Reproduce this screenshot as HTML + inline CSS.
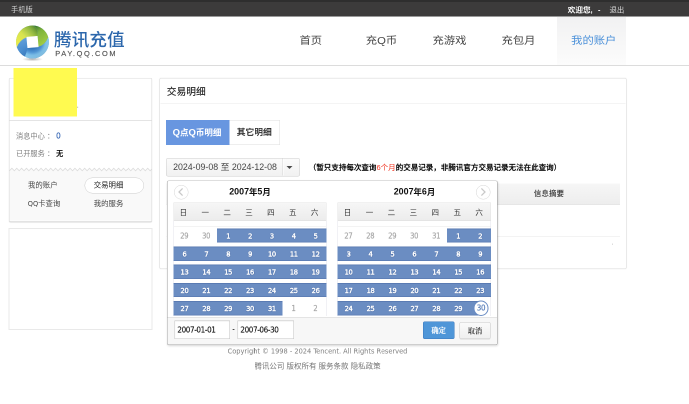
<!DOCTYPE html>
<html lang="zh-CN">
<head>
<meta charset="utf-8">
<title>腾讯充值 - 交易明细</title>
<style>
*{box-sizing:border-box;margin:0;padding:0}
html,body{width:689px;height:404px;overflow:hidden;background:#fff}
body{font-family:"Liberation Sans","Noto Sans CJK SC",sans-serif;color:#333}
#root{will-change:transform;position:absolute;left:0;top:0;width:1378px;height:808px;transform:scale(.5);transform-origin:0 0;background:#fff;overflow:hidden}
#root *{position:absolute;white-space:nowrap}
.t{line-height:1;transform:translateY(-50%)}
.tc{line-height:1;transform:translate(-50%,-50%)}
#topbar{left:0;top:0;width:1378px;height:33.4px;background:#3c3b3b;border-top:4.4px solid #2e2e2e;border-bottom:1.5px solid #333}
#header{left:0;top:33.4px;width:1378px;height:99px;background:#fff;border-bottom:2px solid #dcdcdc}
.nav{font-size:22.6px;color:#444;top:49.1px}
.nav.tc{transform:translate(-50%,-50%) scaleY(.9)}
#navon{left:1114px;top:0.6px;width:138px;height:96px;background:linear-gradient(#f1f1f2,#f9f9f9 75%,#fcfcfc)}
.panel{background:#fff;border:1.6px solid #d6d6d6;border-radius:3px}
.wq{font-family:"Liberation Sans","Noto Sans CJK SC",sans-serif}
.tah{font-family:"DejaVu Sans Condensed","DejaVu Sans","Noto Sans CJK SC",sans-serif}
.cj{position:relative !important;font-size:16.8px;top:1.2px;line-height:0}
.q{position:static !important;font-size:19px;line-height:0}
.dv{font-family:"DejaVu Sans","Noto Sans CJK SC",sans-serif}
.wk{height:37.4px;background:linear-gradient(#f6f6f6,#ececec);border:1px solid #e2e2e2;border-bottom:1.5px solid #dcdcdc}
.wk span{top:0;height:36px;line-height:37.8px;text-align:center;font-size:15px;color:#333;font-weight:400;margin-left:-2.5px}
.tb{border:1px solid #e3e3ea;border-top:0;border-bottom:0}
.wkline{height:1px;background:#e6e6e6}
.d{height:28.8px;line-height:30.3px;text-align:center;font-family:"DejaVu Sans Condensed","DejaVu Sans",sans-serif;font-size:14.8px;letter-spacing:-0.6px;padding-left:0.9px}
.d.on{-webkit-text-stroke:0.8px #fff;text-shadow:0 0 2px rgba(45,75,135,.9),0 1px 1.5px rgba(45,75,135,.7);box-shadow:inset 0 1.6px 0 #5475ad,inset 0 -1.6px 0 #5a7bb2}
.d.on{background:#6b8dc2;color:#fff}
.d.off{color:#a6a6a6;-webkit-text-stroke:0.35px #a6a6a6;padding-left:0;font-size:15px}
.cur{width:30.4px;height:30.4px;border-radius:50%;background:#fff;border:2.2px solid #6a8cc3;color:#5a7fba;line-height:26.8px;-webkit-text-stroke:0.4px #5a7fba;text-align:center;font-family:"DejaVu Sans Condensed","DejaVu Sans",sans-serif;font-size:15.9px;letter-spacing:-0.7px;text-indent:-0.7px}
.arrow{width:29px;height:29px;border:1.5px solid #d4d4d4;border-radius:50%;background:#fff}
.inp{height:37.4px;border:1.5px solid #c4c4c4;background:#fff;box-shadow:inset 0 1px 2px rgba(0,0,0,.08);font-family:"DejaVu Sans Condensed","DejaVu Sans",sans-serif;font-size:16px;letter-spacing:-0.75px;color:#1a1a1a;line-height:35.6px;padding-left:5.3px;-webkit-text-stroke:0.3px #1a1a1a}
.btn{height:34.6px;width:62.6px;border-radius:3px;font-family:"Noto Serif CJK SC","Liberation Serif",serif;font-weight:600;font-size:14.5px;text-align:center;line-height:31px}
</style>
</head>
<body>
<div id="root">
  <div id="topbar">
    <span class="t" style="left:22px;top:15.2px;font-size:14.5px;color:#d0d0d0">手机版</span>
    <span class="t" style="left:1135.5px;top:16.4px;font-size:15.2px;color:#fff;font-weight:700">欢迎您,</span><span class="t" style="left:1196px;top:15.6px;font-size:14.5px;color:#fff;font-weight:700">-</span>
    <span class="t" style="left:1219px;top:16.4px;font-size:14.8px;color:#dcdcdc">退出</span>
  </div>
  <div id="header">
    <div id="navon"></div>
    <svg style="left:26.6px;top:12.6px" width="76" height="80" viewBox="-38 -38 76 80">
      <defs>
        <linearGradient id="g1" gradientUnits="userSpaceOnUse" x1="-32" y1="8" x2="8" y2="-30"><stop offset="0" stop-color="#eeee4a"/><stop offset=".45" stop-color="#d4e143"/><stop offset=".78" stop-color="#88b334"/><stop offset="1" stop-color="#4a8028"/></linearGradient>
        <linearGradient id="g2" gradientUnits="userSpaceOnUse" x1="4" y1="-30" x2="30" y2="6"><stop offset="0" stop-color="#3c7a2a"/><stop offset=".3" stop-color="#7db339"/><stop offset="1" stop-color="#a8d144"/></linearGradient>
        <radialGradient id="g3" gradientUnits="userSpaceOnUse" cx="0" cy="0" r="33"><stop offset=".35" stop-color="#2f6fb4"/><stop offset=".62" stop-color="#4d93d4"/><stop offset=".8" stop-color="#7cc2ee"/><stop offset="1" stop-color="#8fd0f5"/></radialGradient>
        <linearGradient id="g4" gradientUnits="userSpaceOnUse" x1="-32" y1="0" x2="-8" y2="26"><stop offset="0" stop-color="#5b9bd9"/><stop offset=".5" stop-color="#4a8ed0"/><stop offset="1" stop-color="#3577bd"/></linearGradient>
        <radialGradient id="sh" cx="50%" cy="50%" r="50%"><stop offset="0" stop-color="#000" stop-opacity=".3"/><stop offset="1" stop-color="#000" stop-opacity="0"/></radialGradient>
        <radialGradient id="hl" cx="35%" cy="25%" r="80%"><stop offset="0" stop-color="#fff" stop-opacity=".1"/><stop offset=".6" stop-color="#fff" stop-opacity="0"/><stop offset="1" stop-color="#000" stop-opacity=".1"/></radialGradient>
      </defs>
      <ellipse cx="0" cy="34.5" rx="21" ry="4" fill="url(#sh)"/>
      <circle r="32.9" fill="#5b9bd5"/>
      <path d="M31.5 -9.6 Q25.0 6.0 11.5 9.6 L-9.6 11.5 Q-13.0 24.0 -15.4 29.0 A32.9 32.9 0 0 0 31.5 -9.6Z" fill="url(#g3)"/>
      <path d="M-15.4 29.0 Q-13.0 24.0 -9.6 11.5 L-11.5 -9.6 Q-26.0 -4.0 -31.3 10.2 A32.9 32.9 0 0 0 -15.4 29.0Z" fill="url(#g4)"/>
      <path d="M-31.3 10.2 Q-26.0 -4.0 -11.5 -9.6 L9.6 -11.5 Q13.0 -26.0 1.1 -32.9 A32.9 32.9 0 0 0 -31.3 10.2Z" fill="url(#g1)"/>
      <path d="M1.1 -32.9 Q13.0 -26.0 9.6 -11.5 L11.5 9.6 Q25.0 6.0 31.5 -9.6 A32.9 32.9 0 0 0 1.1 -32.9Z" fill="url(#g2)"/>
      <path d="M-11.5 -9.6 L9.6 -11.5 L11.5 9.6 L-9.6 11.5Z" fill="#fff" stroke="#fff" stroke-width="1.2" stroke-linejoin="round"/>
      <circle r="32.9" fill="url(#hl)"/>
    </svg>
    <span class="t" style="left:108px;top:45.6px;font-size:35px;color:#2c67ac;font-weight:500;letter-spacing:0.4px">腾讯充值</span>
    <span class="t" style="left:110.6px;top:73.6px;font-size:14.8px;color:#555;letter-spacing:3.25px;-webkit-text-stroke:0.3px #555">PAY.QQ.COM</span>
    <span class="nav tc" style="left:621.5px">首页</span>
    <span class="nav tc" style="left:763px">充Q币</span>
    <span class="nav tc" style="left:899px">充游戏</span>
    <span class="nav tc" style="left:1037px">充包月</span>
    <span class="nav tc" style="left:1187.5px;color:#4a90d9">我的账户</span>
  </div>

  <!-- sidebar -->
  <div class="panel" style="left:17.8px;top:156.2px;width:286.4px;height:287.4px;border-color:#dadada;border-bottom-color:#c6c6c6;box-shadow:0 1px 2px rgba(0,0,0,.16)"></div>
  <div style="left:19.4px;top:240.2px;width:283.2px;height:1.5px;background:#e4e4e4"></div>
  <span class="t" style="left:32px;top:272px;font-size:14.4px;color:#7e7e7e">消息中心<span style="position:static;margin-left:4.5px">：</span></span>
  <span class="t" style="left:112.5px;top:272px;font-size:15.6px;color:#2a5db0;-webkit-text-stroke:0.3px #2a5db0">0</span>
  <span class="t" style="left:32px;top:306.8px;font-size:14.4px;color:#7e7e7e">已开服务<span style="position:static;margin-left:4.5px">：</span></span>
  <span class="t" style="left:112px;top:306.8px;font-size:14.6px;color:#111;font-weight:700">无</span>
  <svg style="left:19.4px;top:335px" width="283.2" height="106.6" viewBox="0 0 283.2 106.6"><path d="M0.0 6.5 L4.8 1.5 L9.7 6.5 L14.5 1.5 L19.4 6.5 L24.2 1.5 L29.1 6.5 L34.0 1.5 L38.8 6.5 L43.7 1.5 L48.5 6.5 L53.4 1.5 L58.2 6.5 L63.1 1.5 L67.9 6.5 L72.8 1.5 L77.6 6.5 L82.4 1.5 L87.3 6.5 L92.1 1.5 L97.0 6.5 L101.8 1.5 L106.7 6.5 L111.5 1.5 L116.4 6.5 L121.2 1.5 L126.1 6.5 L130.9 1.5 L135.8 6.5 L140.6 1.5 L145.5 6.5 L150.3 1.5 L155.2 6.5 L160.0 1.5 L164.9 6.5 L169.7 1.5 L174.6 6.5 L179.4 1.5 L184.3 6.5 L189.1 1.5 L194.0 6.5 L198.8 1.5 L203.7 6.5 L208.5 1.5 L213.4 6.5 L218.2 1.5 L223.1 6.5 L227.9 1.5 L232.8 6.5 L237.6 1.5 L242.5 6.5 L247.3 1.5 L252.2 6.5 L257.0 1.5 L261.9 6.5 L266.7 1.5 L271.6 6.5 L276.4 1.5 L281.3 6.5 L286.1 1.5 L291.0 6.5 L291.0 106 L0 106Z" fill="#f9f9f9"/><path d="M0.0 6.5 L4.8 1.5 L9.7 6.5 L14.5 1.5 L19.4 6.5 L24.2 1.5 L29.1 6.5 L34.0 1.5 L38.8 6.5 L43.7 1.5 L48.5 6.5 L53.4 1.5 L58.2 6.5 L63.1 1.5 L67.9 6.5 L72.8 1.5 L77.6 6.5 L82.4 1.5 L87.3 6.5 L92.1 1.5 L97.0 6.5 L101.8 1.5 L106.7 6.5 L111.5 1.5 L116.4 6.5 L121.2 1.5 L126.1 6.5 L130.9 1.5 L135.8 6.5 L140.6 1.5 L145.5 6.5 L150.3 1.5 L155.2 6.5 L160.0 1.5 L164.9 6.5 L169.7 1.5 L174.6 6.5 L179.4 1.5 L184.3 6.5 L189.1 1.5 L194.0 6.5 L198.8 1.5 L203.7 6.5 L208.5 1.5 L213.4 6.5 L218.2 1.5 L223.1 6.5 L227.9 1.5 L232.8 6.5 L237.6 1.5 L242.5 6.5 L247.3 1.5 L252.2 6.5 L257.0 1.5 L261.9 6.5 L266.7 1.5 L271.6 6.5 L276.4 1.5 L281.3 6.5 L286.1 1.5 L291.0 6.5" fill="none" stroke="#dcdcdc" stroke-width="1.6"/></svg>
  <span class="t" style="left:56px;top:370.3px;font-size:14.8px;color:#444">我的账户</span>
  <div style="left:169px;top:355px;width:119.4px;height:31.5px;border:1.5px solid #cdcdcd;border-radius:16px;background:#fff"></div>
  <span class="t" style="left:187.5px;top:370.3px;font-size:14.8px;color:#222">交易明细</span>
  <span class="t tah" style="left:55.5px;top:406.7px;font-size:14.7px;color:#444">QQ卡查询</span>
  <span class="t" style="left:187.5px;top:406.7px;font-size:14.8px;color:#444">我的服务</span>
  <div style="left:27px;top:136px;width:127px;height:97px;background:#fffa50"></div>
  <span class="tc" style="left:155.5px;top:210px;font-size:13px;color:#444">.</span>
  <div class="panel" style="left:17px;top:456px;width:288.2px;height:203.6px;border-radius:0;border:2px solid #e9e9e9"></div>

  <!-- main -->
  <div class="panel" style="left:319px;top:156.2px;width:934.2px;height:381.8px;border-color:#dadada;box-shadow:0 0 2.5px rgba(0,0,0,.1)"></div>
  <span class="t" style="left:333.5px;top:184.4px;font-size:19.5px;color:#2a2a2a;font-weight:500">交易明细</span>
  <div style="left:320.5px;top:206.5px;width:930px;height:1.5px;background:#e8e8e8"></div>
  <div style="left:331.6px;top:239.6px;width:127.6px;height:50.4px;background:#6896e0"></div>
  <span class="tc" style="left:394px;top:265px;font-size:17px;color:#fff;font-weight:700"><span class="q">Q</span>点<span class="q">Q</span>币明细</span>
  <div style="left:459.2px;top:239.6px;width:100.8px;height:50.4px;background:#fff;border:1.5px solid #ddd;border-left:0"></div>
  <span class="tc" style="left:508.5px;top:265.3px;font-size:17.5px;color:#2c2c2c;font-weight:500;-webkit-text-stroke:0.3px #2c2c2c">其它明细</span>
  <div style="left:332.2px;top:316.2px;width:267.5px;height:37px;border:1.5px solid #ccc;border-radius:4px;background:linear-gradient(#fbfbfb,#f1f1f1)">
    <div style="left:231.8px;top:0;width:1.5px;height:34px;background:#d4d4d4;box-shadow:1.5px 0 0 #fff"></div>
    <span class="t" style="left:13px;top:17.5px;font-size:17.62px;color:#444">2024-09-08 至 2024-12-08</span>
    <div style="left:240px;top:14.8px;width:0;height:0;border:6.6px solid transparent;border-top:6.4px solid #4a4a4a;border-bottom:0"></div>
  </div>
  <span class="t" style="left:617.5px;top:334.5px;font-size:15.05px;color:#000;font-weight:500;-webkit-text-stroke:0.3px #000">（暂只支持每次查询<span style="position:static;color:#f0321f;font-weight:400;-webkit-text-stroke:0">6个月</span>的交易记录，非腾讯官方交易记录无法在此查询）</span>
  <div style="left:332.5px;top:367.2px;width:907px;height:42.8px;background:linear-gradient(#f6f6f6,#ededed);border-bottom:1.5px solid #dedede"></div>
  <span class="tc" style="left:1097.8px;top:387.2px;font-size:15.1px;color:#333;font-weight:500">信息摘要</span>
  <div style="left:332.5px;top:472.5px;width:907px;height:1.5px;background:#e6e6e6"></div>
  <span class="tc" style="left:1225.5px;top:484.5px;font-size:12px;color:#888">.</span>

  <!-- calendar popup -->
  <div id="pop" style="left:333.7px;top:360.7px;width:661.3px;height:329.3px;background:#fff;border:1.5px solid #9c9c9c;border-top-color:#c2c2c2;border-radius:4px;box-shadow:1px 2px 4px rgba(0,0,0,.17)"></div>
  <div style="left:335.5px;top:635px;width:658px;height:53px;background:#f7f7f7"></div>
  <div class="arrow" style="left:348px;top:370px"><svg style="left:0;top:0" width="26" height="26" viewBox="0 0 26 26"><path d="M16.2 5.8 L9 13 L16.2 20.2" fill="none" stroke="#c9c9c9" stroke-width="2.5"/></svg></div>
  <div class="arrow" style="left:952px;top:370px"><svg style="left:0;top:0" width="26" height="26" viewBox="0 0 26 26"><path d="M9.8 5.8 L17 13 L9.8 20.2" fill="none" stroke="#c9c9c9" stroke-width="2.5"/></svg></div>
  <span class="tc" style="left:500px;top:384.1px;font-size:17.8px;font-weight:700;color:#111">2007<span class="cj">年</span>5<span class="cj">月</span></span>
  <span class="tc" style="left:829px;top:384.1px;font-size:17.8px;font-weight:700;color:#111">2007<span class="cj">年</span>6<span class="cj">月</span></span>
  <div class="tb" style="left:346.5px;top:405px;width:306px;height:227px"></div>
<div class="wk" style="left:346.5px;top:405px;width:306px">
<span style="left:0.00px;width:43.71px">日</span>
<span style="left:43.71px;width:43.71px">一</span>
<span style="left:87.43px;width:43.71px">二</span>
<span style="left:131.14px;width:43.71px">三</span>
<span style="left:174.86px;width:43.71px">四</span>
<span style="left:218.57px;width:43.71px">五</span>
<span style="left:262.29px;width:43.71px">六</span>
</div>
<div class="wkline" style="left:346.5px;top:452px;width:306px"></div>
<div class="d off" style="left:346.50px;top:456.50px;width:44.01px">29</div>
<div class="d off" style="left:390.21px;top:456.50px;width:44.01px">30</div>
<div class="d on" style="left:433.93px;top:456.50px;width:44.01px">1</div>
<div class="d on" style="left:477.64px;top:456.50px;width:44.01px">2</div>
<div class="d on" style="left:521.36px;top:456.50px;width:44.01px">3</div>
<div class="d on" style="left:565.07px;top:456.50px;width:44.01px">4</div>
<div class="d on" style="left:608.79px;top:456.50px;width:44.01px">5</div>
<div class="d on" style="left:346.50px;top:492.88px;width:44.01px">6</div>
<div class="d on" style="left:390.21px;top:492.88px;width:44.01px">7</div>
<div class="d on" style="left:433.93px;top:492.88px;width:44.01px">8</div>
<div class="d on" style="left:477.64px;top:492.88px;width:44.01px">9</div>
<div class="d on" style="left:521.36px;top:492.88px;width:44.01px">10</div>
<div class="d on" style="left:565.07px;top:492.88px;width:44.01px">11</div>
<div class="d on" style="left:608.79px;top:492.88px;width:44.01px">12</div>
<div class="d on" style="left:346.50px;top:529.26px;width:44.01px">13</div>
<div class="d on" style="left:390.21px;top:529.26px;width:44.01px">14</div>
<div class="d on" style="left:433.93px;top:529.26px;width:44.01px">15</div>
<div class="d on" style="left:477.64px;top:529.26px;width:44.01px">16</div>
<div class="d on" style="left:521.36px;top:529.26px;width:44.01px">17</div>
<div class="d on" style="left:565.07px;top:529.26px;width:44.01px">18</div>
<div class="d on" style="left:608.79px;top:529.26px;width:44.01px">19</div>
<div class="d on" style="left:346.50px;top:565.64px;width:44.01px">20</div>
<div class="d on" style="left:390.21px;top:565.64px;width:44.01px">21</div>
<div class="d on" style="left:433.93px;top:565.64px;width:44.01px">22</div>
<div class="d on" style="left:477.64px;top:565.64px;width:44.01px">23</div>
<div class="d on" style="left:521.36px;top:565.64px;width:44.01px">24</div>
<div class="d on" style="left:565.07px;top:565.64px;width:44.01px">25</div>
<div class="d on" style="left:608.79px;top:565.64px;width:44.01px">26</div>
<div class="d on" style="left:346.50px;top:602.02px;width:44.01px">27</div>
<div class="d on" style="left:390.21px;top:602.02px;width:44.01px">28</div>
<div class="d on" style="left:433.93px;top:602.02px;width:44.01px">29</div>
<div class="d on" style="left:477.64px;top:602.02px;width:44.01px">30</div>
<div class="d on" style="left:521.36px;top:602.02px;width:44.01px">31</div>
<div class="d off" style="left:565.07px;top:602.02px;width:44.01px">1</div>
<div class="d off" style="left:608.79px;top:602.02px;width:44.01px">2</div>
  <div class="tb" style="left:674.6px;top:405px;width:307.2px;height:227px"></div>
<div class="wk" style="left:674.6px;top:405px;width:307.2px">
<span style="left:0.00px;width:43.89px">日</span>
<span style="left:43.89px;width:43.89px">一</span>
<span style="left:87.77px;width:43.89px">二</span>
<span style="left:131.66px;width:43.89px">三</span>
<span style="left:175.54px;width:43.89px">四</span>
<span style="left:219.43px;width:43.89px">五</span>
<span style="left:263.31px;width:43.89px">六</span>
</div>
<div class="wkline" style="left:674.6px;top:452px;width:307.2px"></div>
<div class="d off" style="left:674.60px;top:456.50px;width:44.19px">27</div>
<div class="d off" style="left:718.49px;top:456.50px;width:44.19px">28</div>
<div class="d off" style="left:762.37px;top:456.50px;width:44.19px">29</div>
<div class="d off" style="left:806.26px;top:456.50px;width:44.19px">30</div>
<div class="d off" style="left:850.14px;top:456.50px;width:44.19px">31</div>
<div class="d on" style="left:894.03px;top:456.50px;width:44.19px">1</div>
<div class="d on" style="left:937.91px;top:456.50px;width:44.19px">2</div>
<div class="d on" style="left:674.60px;top:492.88px;width:44.19px">3</div>
<div class="d on" style="left:718.49px;top:492.88px;width:44.19px">4</div>
<div class="d on" style="left:762.37px;top:492.88px;width:44.19px">5</div>
<div class="d on" style="left:806.26px;top:492.88px;width:44.19px">6</div>
<div class="d on" style="left:850.14px;top:492.88px;width:44.19px">7</div>
<div class="d on" style="left:894.03px;top:492.88px;width:44.19px">8</div>
<div class="d on" style="left:937.91px;top:492.88px;width:44.19px">9</div>
<div class="d on" style="left:674.60px;top:529.26px;width:44.19px">10</div>
<div class="d on" style="left:718.49px;top:529.26px;width:44.19px">11</div>
<div class="d on" style="left:762.37px;top:529.26px;width:44.19px">12</div>
<div class="d on" style="left:806.26px;top:529.26px;width:44.19px">13</div>
<div class="d on" style="left:850.14px;top:529.26px;width:44.19px">14</div>
<div class="d on" style="left:894.03px;top:529.26px;width:44.19px">15</div>
<div class="d on" style="left:937.91px;top:529.26px;width:44.19px">16</div>
<div class="d on" style="left:674.60px;top:565.64px;width:44.19px">17</div>
<div class="d on" style="left:718.49px;top:565.64px;width:44.19px">18</div>
<div class="d on" style="left:762.37px;top:565.64px;width:44.19px">19</div>
<div class="d on" style="left:806.26px;top:565.64px;width:44.19px">20</div>
<div class="d on" style="left:850.14px;top:565.64px;width:44.19px">21</div>
<div class="d on" style="left:894.03px;top:565.64px;width:44.19px">22</div>
<div class="d on" style="left:937.91px;top:565.64px;width:44.19px">23</div>
<div class="d on" style="left:674.60px;top:602.02px;width:44.19px">24</div>
<div class="d on" style="left:718.49px;top:602.02px;width:44.19px">25</div>
<div class="d on" style="left:762.37px;top:602.02px;width:44.19px">26</div>
<div class="d on" style="left:806.26px;top:602.02px;width:44.19px">27</div>
<div class="d on" style="left:850.14px;top:602.02px;width:44.19px">28</div>
<div class="d on" style="left:894.03px;top:602.02px;width:44.19px">29</div>
<div class="d on" style="left:937.91px;top:602.02px;width:24.34px"></div>
<div class="cur" style="left:947.06px;top:601.42px">30</div>
  <div style="left:335px;top:634px;width:659px;height:1.5px;background:#e4e4e4"></div>
  <div class="inp" style="left:348.5px;top:641px;width:111px">2007-01-01</div>
  <span class="tc" style="left:467px;top:658px;font-size:14px;color:#333;font-weight:700">-</span>
  <div class="inp" style="left:474.5px;top:641px;width:113px">2007-06-30</div>
  <div class="btn" style="left:846px;top:643.4px;background:#4f96d8;border:1.6px solid #3b78bd;color:#fff;-webkit-text-stroke:0.3px #fff">确定</div>
  <div class="btn" style="left:918.6px;top:643.6px;background:linear-gradient(#fafafa,#efefef);border:1.5px solid #c8c8c8;box-shadow:0 1px 1px rgba(0,0,0,.12);color:#222">取消</div>

  <!-- footer -->
  <span class="tc tah" style="left:635px;top:702px;font-size:14.75px;color:#7e7e7e">Copyright © 1998 - 2024 Tencent. All Rights Reserved</span>
  <span class="tc" style="left:635px;top:731px;font-size:15px;color:#747474">腾讯公司 版权所有 服务条款 隐私政策</span>
</div>
</body>
</html>
